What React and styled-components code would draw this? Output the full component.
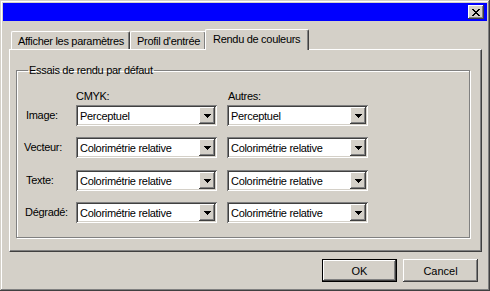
import React from "react";
import styled, { createGlobalStyle } from "styled-components";

const Global = createGlobalStyle`
  html, body {
    margin: 0;
    padding: 0;
    background: #d4d0c8;
  }
  * {
    box-sizing: border-box;
  }
`;

const Window = styled.div`
  width: 490px;
  height: 291px;
  background: #d4d0c8;
  font-family: "Liberation Sans", Arial, sans-serif;
  font-size: 11px;
  letter-spacing: -0.3px;
  color: #000;
  padding: 3px;
  display: flex;
  flex-direction: column;
  box-shadow: inset -1px -1px 0 #404040, inset 1px 1px 0 #d4d0c8,
    inset -2px -2px 0 #808080, inset 2px 2px 0 #fff;
`;

const TitleBar = styled.div`
  height: 18px;
  background: #0000ff;
  display: flex;
  justify-content: flex-end;
  align-items: center;
  padding-right: 3px;
`;

const RaisedButton = styled.button`
  background: #d4d0c8;
  border: none;
  padding: 0;
  font-family: "Liberation Sans", Arial, sans-serif;
  font-size: 11px;
  color: #000;
  display: flex;
  align-items: center;
  justify-content: center;
  box-shadow: inset -1px -1px 0 #404040, inset 1px 1px 0 #fff,
    inset -2px -2px 0 #808080, inset 2px 2px 0 #d4d0c8;
`;

const CloseButton = styled(RaisedButton)`
  width: 16px;
  height: 14px;
`;

const Content = styled.div`
  flex: 1;
  display: flex;
  flex-direction: column;
  padding: 8px 6px 0 6px;
`;

const TabRow = styled.div`
  display: flex;
  align-items: flex-end;
  height: 20px;
  padding-left: 2px;
  position: relative;
  z-index: 1;
`;

const Tab = styled.div`
  height: ${(p) => (p.$active ? "21px" : "18px")};
  padding: ${(p) => (p.$active ? "3px 8px 0 7px" : "3px 5px 0 6px")};
  margin: ${(p) => (p.$active ? "0 -1px -1px -1px" : "0")};
  background: #d4d0c8;
  white-space: nowrap;
  border-top: 1px solid #fff;
  border-left: 1px solid #fff;
  border-right: 1px solid #404040;
  border-top-left-radius: 2px;
  border-top-right-radius: 2px;
  box-shadow: inset -1px 0 0 #808080;
`;

const Panel = styled.div`
  height: 203px;
  width: 473px;
  padding: 14px 11px 0 6px;
  border-top: 1px solid #fff;
  border-left: 1px solid #fff;
  border-right: 1px solid #404040;
  border-bottom: 1px solid #404040;
  box-shadow: inset -1px -1px 0 #808080;
`;

const Group = styled.fieldset`
  margin: 0;
  height: 174px;
  border: 1px solid #808080;
  box-shadow: 1px 1px 0 #fff, inset 1px 1px 0 #fff;
  padding: 0 0 0 7px;
`;

const Legend = styled.legend`
  padding: 0 1px;
  margin-left: 4px;
  line-height: 12px;
`;

const Grid = styled.div`
  display: grid;
  grid-template-columns: 42px 141px 141px;
  column-gap: 10px;
  margin-top: 14px;
`;

const ColHead = styled.div`
  height: 15px;
  padding-left: ${(p) => p.$indent}px;
  grid-column: ${(p) => p.$col};
`;

const RowLabel = styled.div`
  height: 21px;
  line-height: 20px;
  white-space: nowrap;
  padding-left: ${(p) => p.$indent || 0}px;
  margin-bottom: ${(p) => p.$gap}px;
`;

const Combo = styled.div`
  height: 21px;
  background: #fff;
  display: flex;
  align-items: center;
  padding: 2px;
  margin-bottom: ${(p) => p.$gap}px;
  box-shadow: inset 1px 1px 0 #808080, inset -1px -1px 0 #fff,
    inset 2px 2px 0 #404040, inset -2px -2px 0 #d4d0c8;
`;

const ComboText = styled.span`
  flex: 1;
  padding-left: 2px;
  white-space: nowrap;
  overflow: hidden;
`;

const Arrow = styled(RaisedButton)`
  width: 16px;
  height: 17px;
`;

const Footer = styled.div`
  display: flex;
  justify-content: flex-end;
  gap: 6px;
  padding: 7px 3px 0 0;
`;

const DialogButton = styled(RaisedButton)`
  width: 75px;
  height: 23px;
  ${(p) =>
    p.$default &&
    `
    box-shadow: inset 0 0 0 1px #000, inset -2px -2px 0 #404040, inset 2px 2px 0 #fff,
      inset -3px -3px 0 #808080;
  `}
`;

const CloseIcon = () => (
  <svg width="8" height="7" viewBox="0 0 8 7">
    <path d="M0 0h2v1h1v1h2V1h1V0h2v1H7v1H6v1H5v1h1v1h1v1h1v1H6V6H5V5H3v1H2v1H0V6h1V5h1V4h1V3H2V2H1V1H0z" fill="#000" />
  </svg>
);

const DownArrow = () => (
  <svg width="7" height="4" viewBox="0 0 7 4">
    <path d="M0 0h7v1H6v1H5v1H4v1H3V3H2V2H1V1H0z" fill="#000" />
  </svg>
);

const rows = [
  { label: "Image", cmyk: "Perceptuel", other: "Perceptuel", indent: 2, gap: 11 },
  { label: "Vecteur", cmyk: "Colorimétrie relative", other: "Colorimétrie relative", indent: 0, gap: 12 },
  { label: "Texte", cmyk: "Colorimétrie relative", other: "Colorimétrie relative", indent: 2, gap: 11 },
  { label: "Dégradé", cmyk: "Colorimétrie relative", other: "Colorimétrie relative", indent: 1, gap: 0 },
];

const Select = ({ value, gap }) => (
  <Combo $gap={gap}>
    <ComboText>{value}</ComboText>
    <Arrow>
      <DownArrow />
    </Arrow>
  </Combo>
);

export default function App() {
  return (
    <>
      <Global />
      <Window>
        <TitleBar>
          <CloseButton>
            <CloseIcon />
          </CloseButton>
        </TitleBar>
        <Content>
          <TabRow>
            <Tab>Afficher les paramètres</Tab>
            <Tab>Profil d'entrée</Tab>
            <Tab $active>Rendu de couleurs</Tab>
          </TabRow>
          <Panel>
            <Group>
              <Legend>Essais de rendu par défaut</Legend>
              <Grid>
                <ColHead $col={2} $indent={0}>CMYK:</ColHead>
                <ColHead $col={3} $indent={1}>Autres:</ColHead>
                {rows.map((r) => (
                  <React.Fragment key={r.label}>
                    <RowLabel $indent={r.indent} $gap={r.gap}>{r.label}:</RowLabel>
                    <Select value={r.cmyk} gap={r.gap} />
                    <Select value={r.other} gap={r.gap} />
                  </React.Fragment>
                ))}
              </Grid>
            </Group>
          </Panel>
          <Footer>
            <DialogButton $default>OK</DialogButton>
            <DialogButton>Cancel</DialogButton>
          </Footer>
        </Content>
      </Window>
    </>
  );
}
